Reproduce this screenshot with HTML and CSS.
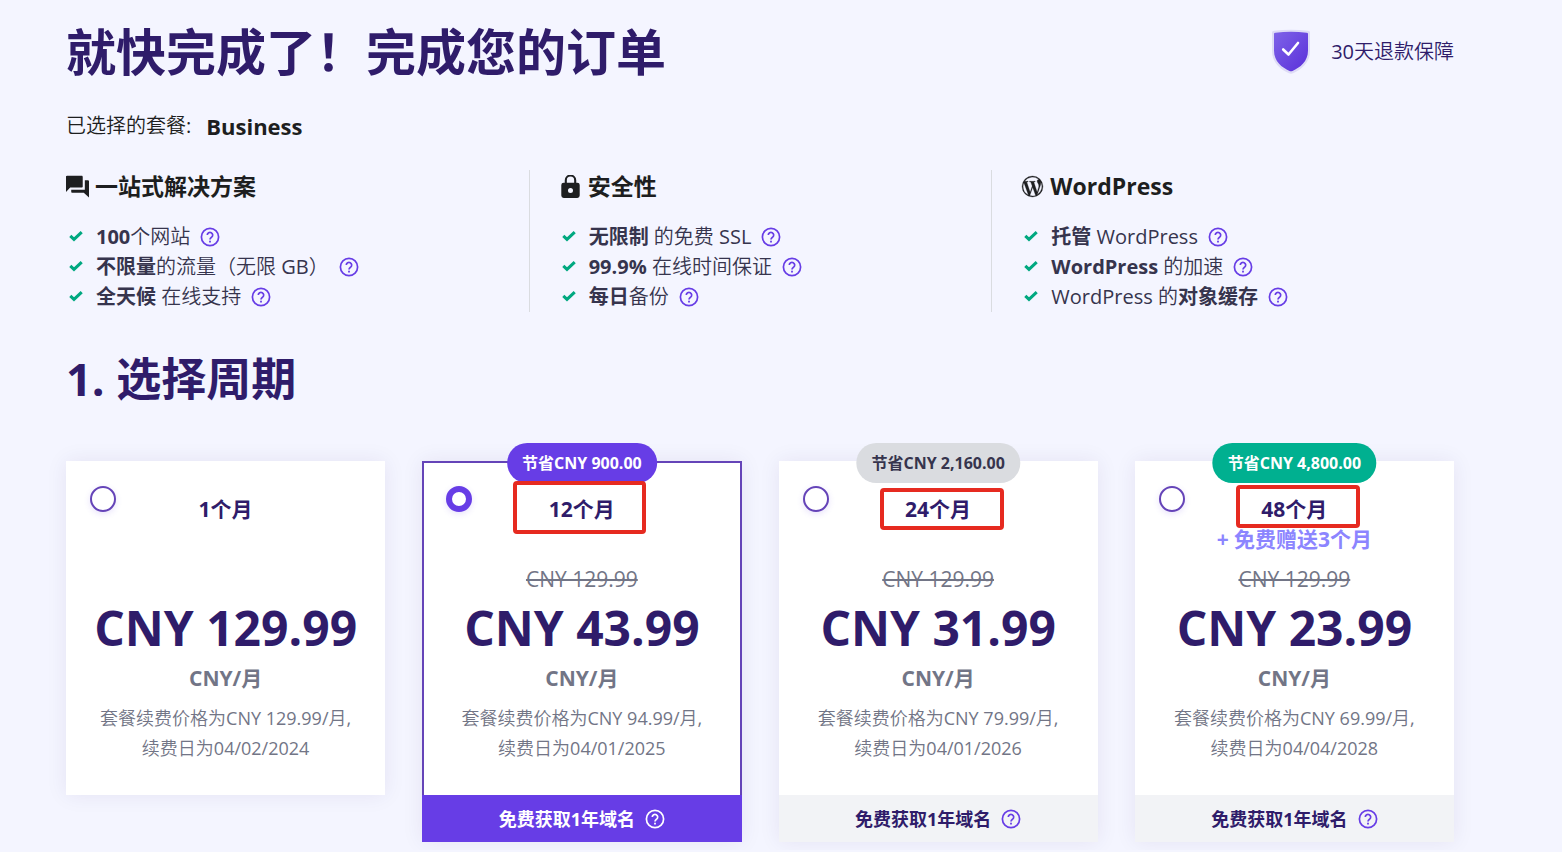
FILE: index.html
```
<!DOCTYPE html>
<html lang="zh-CN">
<head>
<meta charset="utf-8">
<meta name="viewport" content="width=device-width, initial-scale=1">
<title>完成您的订单</title>
<link rel="stylesheet" href="styles.css">
</head>
<body>
<svg class="sprite" aria-hidden="true">
  <symbol id="help" viewBox="0 0 20 20">
    <circle cx="10" cy="10" r="8.6" fill="none" stroke="currentColor" stroke-width="1.7"/>
    <path d="M7.3 8.1a2.7 2.7 0 1 1 4.2 2.2c-.9.65-1.5 1.1-1.5 2.2" fill="none" stroke="currentColor" stroke-width="1.7"/>
    <rect x="9.1" y="13.7" width="1.8" height="1.8" fill="currentColor"/>
  </symbol>
  <symbol id="check" viewBox="0 0 14 12">
    <path d="M1.3 4.8 5 8.300 12.700 1.200" fill="none" stroke="currentColor" stroke-width="3.1"/>
  </symbol>
</svg>
<main class="page">
  <header class="top">
    <h1 class="title">就快完成了！完成您的订单</h1>
    <div class="guarantee">
      <svg class="shield" viewBox="0 0 40 46" aria-hidden="true">
        <defs><linearGradient id="shade" x1="0" y1="0" x2="1" y2="1"><stop offset="0" stop-color="#7e63e8"/><stop offset="1" stop-color="#5a2fd9"/></linearGradient></defs>
        <path d="M1 3.5Q1 1.8 3 1.7Q20-.4 37 1.7Q39 1.8 39 3.5V22C39 34 30 40.5 22 44.3Q20 45.2 18 44.3C10 40.5 1 34 1 22Z" fill="#dedcf6"/>
        <path d="M3 4.8Q3 3.8 4.500 3.700Q20 2 35.500 3.700Q37 3.800 37 4.800V21.500C37 32.500 29 38.500 21.500 42Q20 42.700 18.500 42C11 38.500 3 32.500 3 21.500Z" fill="url(#shade)"/>
        <path d="m12.200 20.500 5.300 5 9.500-11.500" fill="none" stroke="#fff" stroke-width="2.600" stroke-linecap="round" stroke-linejoin="round"/>
      </svg>
      <span>30天退款保障</span>
    </div>
  </header>

  <p class="chosen"><span>已选择的套餐:</span><strong>Business</strong></p>

  <div class="features">
    <section class="feature">
      <h3 class="feature-title">
        <svg class="feature-icon" viewBox="1 1 22 22" aria-hidden="true"><path fill="currentColor" d="M21 6h-2v9H6v2c0 .55.45 1 1 1h11l5 4.500V7c0-.55-.45-1-1.500-1zM17 12V3c0-.7-.45-1.200-1-1.200H2c-.7 0-1.200.5-1.200 1.200v14.500L5 13h11c.55 0 1-.45 1-1z"/></svg>
        <span>一站式解决方案</span>
      </h3>
      <ul class="feature-list">
        <li><svg class="tick"><use href="#check"/></svg><span><b>100</b>个网站</span><button class="help" type="button" aria-label="帮助"><svg><use href="#help"/></svg></button></li>
        <li><svg class="tick"><use href="#check"/></svg><span><b>不限量</b>的流量（无限 GB）</span><button class="help" type="button" aria-label="帮助"><svg><use href="#help"/></svg></button></li>
        <li><svg class="tick"><use href="#check"/></svg><span><b>全天候</b> 在线支持</span><button class="help" type="button" aria-label="帮助"><svg><use href="#help"/></svg></button></li>
      </ul>
    </section>
    <section class="feature">
      <h3 class="feature-title">
        <svg class="feature-icon" viewBox="1 1 22 22" aria-hidden="true"><path fill="currentColor" fill-rule="evenodd" d="M18.500 8.300H17.500V6A5.500 5.500 0 0 0 6.500 6V8.300H5.500A2.300 2.300 0 0 0 3.200 10.600V20.700A2.300 2.300 0 0 0 5.500 23H18.500A2.300 2.300 0 0 0 20.800 20.700V10.600A2.300 2.300 0 0 0 18.500 8.300ZM12 18.200A2.400 2.400 0 1 1 12 13.400A2.400 2.400 0 0 1 12 18.200ZM8.500 8.300V6A3.500 3.500 0 0 1 15.500 6V8.300Z"/></svg>
        <span>安全性</span>
      </h3>
      <ul class="feature-list">
        <li><svg class="tick"><use href="#check"/></svg><span><b>无限制</b> 的免费 SSL</span><button class="help" type="button" aria-label="帮助"><svg><use href="#help"/></svg></button></li>
        <li><svg class="tick"><use href="#check"/></svg><span><b>99.9%</b> 在线时间保证</span><button class="help" type="button" aria-label="帮助"><svg><use href="#help"/></svg></button></li>
        <li><svg class="tick"><use href="#check"/></svg><span><b>每日</b>备份</span><button class="help" type="button" aria-label="帮助"><svg><use href="#help"/></svg></button></li>
      </ul>
    </section>
    <section class="feature">
      <h3 class="feature-title">
        <svg class="feature-icon" viewBox="1 1 22 22" aria-hidden="true"><path fill="currentColor" stroke="currentColor" stroke-width=".3" d="M12 2a10 10 0 1 0 0 20 10 10 0 0 0 0-20zM3 12c0-1.300.28-2.540.780-3.660L8.070 20.100A9 9 0 0 1 3 12zm9 9c-.88 0-1.730-.13-2.540-.370l2.700-7.840 2.770 7.580.060.120c-.93.330-1.940.510-2.990.510zm1.240-13.220c.54-.030 1.030-.090 1.030-.090.480-.060.430-.770-.06-.740 0 0-1.450.110-2.390.110-.88 0-2.370-.11-2.370-.11-.480-.02-.54.710-.05.740 0 0 .46.060.94.090l1.400 3.840-1.970 5.900-3.270-9.740c.54-.02 1.030-.080 1.030-.080.480-.06.430-.770-.06-.740 0 0-1.450.110-2.390.110l-.580-.010A9 9 0 0 1 18.080 5.370l-.110-.010c-.89 0-1.520.77-1.520 1.600 0 .74.430 1.370.89 2.110.340.6.740 1.370.74 2.490 0 .77-.3 1.660-.690 2.910l-.9 3.010-3.250-9.700zm3.290 12 2.750-7.940c.51-1.290.680-2.310.680-3.220 0-.33-.02-.64-.06-.930a8.990 8.990 0 0 1-3.370 12.090z"/></svg>
        <span>WordPress</span>
      </h3>
      <ul class="feature-list">
        <li><svg class="tick"><use href="#check"/></svg><span><b>托管</b> WordPress</span><button class="help" type="button" aria-label="帮助"><svg><use href="#help"/></svg></button></li>
        <li><svg class="tick"><use href="#check"/></svg><span><b>WordPress</b> 的加速</span><button class="help" type="button" aria-label="帮助"><svg><use href="#help"/></svg></button></li>
        <li><svg class="tick"><use href="#check"/></svg><span>WordPress 的<b>对象缓存</b></span><button class="help" type="button" aria-label="帮助"><svg><use href="#help"/></svg></button></li>
      </ul>
    </section>
  </div>

  <h2 class="step">1. 选择周期</h2>

  <div class="plans">
    <article class="plan">
      <label class="plan-body">
        <span class="plan-head"><input class="radio" type="radio" name="period"><span class="term">1个月</span></span>
        <span class="old"></span>
        <strong class="price">CNY 129.99</strong>
        <span class="unit">CNY/月</span>
        <span class="renewal">套餐续费价格为CNY 129.99/月,<br>续费日为04/02/2024</span>
      </label>
    </article>
    <article class="plan plan-selected">
      <span class="badge">节省CNY 900.00</span>
      <span class="mark mark-a"></span>
      <label class="plan-body">
        <span class="plan-head"><input class="radio" type="radio" name="period" checked><span class="term">12个月</span></span>
        <s class="old">CNY 129.99</s>
        <strong class="price">CNY 43.99</strong>
        <span class="unit">CNY/月</span>
        <span class="renewal">套餐续费价格为CNY 94.99/月,<br>续费日为04/01/2025</span>
      </label>
      <footer class="perk"><span>免费获取1年域名</span><button class="help" type="button" aria-label="帮助"><svg><use href="#help"/></svg></button></footer>
    </article>
    <article class="plan">
      <span class="badge badge-grey">节省CNY 2,160.00</span>
      <span class="mark mark-b"></span>
      <label class="plan-body">
        <span class="plan-head"><input class="radio" type="radio" name="period"><span class="term">24个月</span></span>
        <s class="old">CNY 129.99</s>
        <strong class="price">CNY 31.99</strong>
        <span class="unit">CNY/月</span>
        <span class="renewal">套餐续费价格为CNY 79.99/月,<br>续费日为04/01/2026</span>
      </label>
      <footer class="perk"><span>免费获取1年域名</span><button class="help" type="button" aria-label="帮助"><svg><use href="#help"/></svg></button></footer>
    </article>
    <article class="plan">
      <span class="badge badge-green">节省CNY 4,800.00</span>
      <span class="mark mark-c"></span>
      <label class="plan-body">
        <span class="plan-head"><input class="radio" type="radio" name="period"><span class="term">48个月<span class="bonus">+ 免费赠送3个月</span></span></span>
        <s class="old">CNY 129.99</s>
        <strong class="price">CNY 23.99</strong>
        <span class="unit">CNY/月</span>
        <span class="renewal">套餐续费价格为CNY 69.99/月,<br>续费日为04/04/2028</span>
      </label>
      <footer class="perk"><span>免费获取1年域名</span><button class="help" type="button" aria-label="帮助"><svg><use href="#help"/></svg></button></footer>
    </article>
  </div>
</main>
</body>
</html>
```

FILE: styles.css
```
* { box-sizing: border-box; }
body {
  margin: 0;
  background: #f4f5ff;
  color: #36344d;
  font: 400 20px/30px "Open Sans", "Noto Sans CJK SC DemiLight", "Noto Sans CJK SC", sans-serif;
}
h1, h2, h3, p, ul { margin: 0; padding: 0; }
h1, h2, h3, b, strong, .term, .unit, .perk, .badge { font-family: "Open Sans", "Noto Sans CJK SC", sans-serif; }
.sprite { display: none; }
.page { padding: 16px 108px 8px 66px; }

.top { display: flex; justify-content: space-between; align-items: center; }
.title { color: #2f1c6a; font-size: 50px; line-height: 72px; font-weight: 700; }
.guarantee { display: flex; align-items: center; gap: 20px; color: #2f1c6a; }
.shield { width: 40px; height: 46px; }

.chosen {
  display: flex;
  align-items: center;
  gap: 15px;
  margin-top: 22px;
  color: #1d1e20;
  line-height: 32px;
}
.chosen strong { font-size: 22px; font-weight: 700; }

.features { display: grid; grid-template-columns: repeat(3, 1fr); margin-top: 28px; }
.feature + .feature { padding-left: 29px; border-left: 1px solid #dadce0; }
.feature-title {
  display: flex;
  align-items: center;
  gap: 6px;
  color: #1d1e20;
  font-size: 23px;
  line-height: 32px;
  font-weight: 700;
}
.feature-icon { width: 23px; height: 23px; }
.feature-list { margin-top: 20px; list-style: none; }
.feature-list li { display: flex; align-items: center; }
.feature-list b { font-weight: 700; }
.tick { width: 14px; height: 12px; margin: 0 13px 0 3px; color: #00a880; }
.help {
  display: block;
  width: 20px;
  height: 20px;
  margin-left: 10px;
  padding: 0;
  border: 0;
  background: none;
  color: #673de6;
}
.help svg { display: block; width: 20px; height: 20px; }

.step { margin-top: 35px; color: #2f1c6a; font-size: 45px; line-height: 64px; font-weight: 700; }

.plans {
  display: grid;
  grid-template-columns: repeat(4, minmax(0, 1fr));
  align-items: start;
  gap: 37px;
  margin-top: 50px;
}
.plan { position: relative; background: #fff; box-shadow: 0 0 20px rgba(47, 28, 106, .08); }
.plan-body {
  display: flex;
  flex-direction: column;
  align-items: center;
  padding: 25px 24px 32px;
  text-align: center;
}
.plan-head {
  display: grid;
  grid-template-columns: 26px 1fr 26px;
  align-self: stretch;
  min-height: 78px;
}
.radio {
  appearance: none;
  width: 26px;
  height: 26px;
  margin: 0;
  border: 2px solid #6544b8;
  border-radius: 50%;
  background: #fff;
  box-shadow: 0 2px 6px rgba(103, 61, 230, .15);
}
.radio:checked { border: 6px solid #673de6; }
.term { padding-top: 8px; color: #2f1c6a; font-size: 21px; font-weight: 700; }
.bonus { display: block; color: #8c85ff; white-space: nowrap; }
.old { min-height: 30px; color: #727586; font-size: 21px; }
.price { margin-top: 4px; color: #2f1c6a; font-size: 48px; line-height: 60px; font-weight: 700; white-space: nowrap; }
.unit { margin-top: 5px; color: #727586; font-size: 21px; font-weight: 700; }
.renewal { margin-top: 10px; color: #727586; font-size: 18px; white-space: nowrap; }
.perk {
  display: flex;
  align-items: center;
  justify-content: center;
  height: 47px;
  background: #f2f3f6;
  color: #2f1c6a;
  font-size: 18px;
  font-weight: 700;
}
.plan-selected .plan-body { padding: 23px 22px 32px; border: 2px solid #6544b8; border-bottom: 0; }
.plan-selected .perk { background: #673de6; color: #fff; }
.plan-selected .help { color: #fff; }

.badge {
  position: absolute;
  top: -18px;
  left: 50%;
  transform: translateX(-50%);
  padding: 0 15px;
  border-radius: 20px;
  background: #673de6;
  color: #fff;
  font-size: 16px;
  line-height: 40px;
  font-weight: 700;
  white-space: nowrap;
}
.badge-grey { background: #dadce0; color: #36344d; }
.badge-green { background: #00b090; }

.mark { position: absolute; border: 4px solid #e62a20; border-radius: 4px; }
.mark-a { top: 20px; left: 91px; width: 133px; height: 53px; }
.mark-b { top: 27px; left: 101px; width: 124px; height: 42px; }
.mark-c { top: 24px; left: 101px; width: 124px; height: 43px; }
```
